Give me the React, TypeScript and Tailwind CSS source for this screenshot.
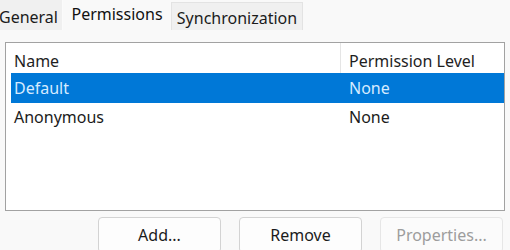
import React from 'react';

const rows = [
  { name: 'Default', level: 'None', selected: true },
  { name: 'Anonymous', level: 'None', selected: false },
];

export default function App() {
  return (
    <div className="w-[510px] h-[250px] overflow-hidden bg-[#f9f9f9] text-[16px] text-[#1b1b1b] font-['Noto_Sans',sans-serif]">
      {/* Tabs */}
      <div className="flex h-[30px] items-stretch">
        <div className="w-[64px] bg-[#f0f0f0] border-r border-[#fbfbfb] flex items-center pt-[3px] leading-none -ml-[1px] overflow-hidden">
          <span>General</span>
        </div>
        <div className="w-[108px] flex items-start justify-center pt-[6px] leading-none text-[#111]">
          Permissions
        </div>
        <div className="mt-[2px] w-[132px] bg-[#f0f0f0] border border-b-0 border-[#e3e3e3] flex items-center justify-center pt-[2px] leading-none">
          Synchronization
        </div>
      </div>

      {/* List box */}
      <div className="px-[5px] pt-[12px]">
        <div className="h-[169px] border border-[#a2a2a2] bg-white">
          <div className="flex h-[30px] items-center leading-none text-[#1e1e1e]">
            <div className="w-[334px] pl-[8px] h-full flex items-center pt-[5px]">Name</div>
            <div className="h-full border-l border-[#e5e5e5] pl-[8px] flex items-center pt-[5px]">Permission Level</div>
          </div>
          {rows.map((r) => (
            <div
              key={r.name}
              className={
                r.selected
                  ? 'ml-[5px] flex h-[30px] items-center leading-none bg-[#0078d7] text-[#d6ebff]'
                  : 'ml-[5px] flex h-[28px] items-center leading-none'
              }
            >
              <div className="w-[329px] pl-[3px]">{r.name}</div>
              <div className="pl-[9px]">{r.level}</div>
            </div>
          ))}
        </div>
      </div>

      {/* Buttons */}
      <div className="flex justify-end gap-[18px] pr-[7px] mt-[6px]">
        <button className="w-[123px] h-[36px] rounded-[4px] border border-[#d3d3d3] bg-[#fdfdfd] text-[#1b1b1b] leading-none">
          Add...
        </button>
        <button className="w-[123px] h-[36px] rounded-[4px] border border-[#d3d3d3] bg-[#fdfdfd] text-[#1b1b1b] leading-none">
          Remove
        </button>
        <button className="w-[123px] h-[36px] rounded-[4px] border border-[#e6e6e6] bg-[#fbfbfb] text-[#9d9d9d] leading-none">
          Properties...
        </button>
      </div>
    </div>
  );
}
